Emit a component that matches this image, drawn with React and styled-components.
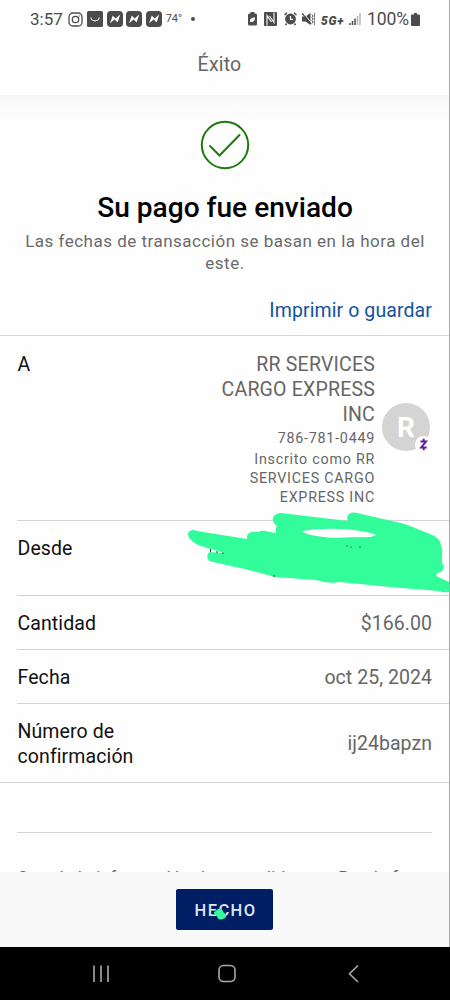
import React from 'react';
import styled, { createGlobalStyle } from 'styled-components';

const GlobalStyle = createGlobalStyle`
  * {
    box-sizing: border-box;
  }

  body {
    margin: 0;
    background-color: #fefefe;
    font-family: Roboto, "Liberation Sans", sans-serif;
  }
`;

const Screen = styled.div`
  display: flex;
  flex-direction: column;
  height: 1000px;
  overflow: hidden;
`;

const Page = styled.div`
  height: 947px;
  display: flex;
  flex-direction: column;
  border-right: 1px solid #a8a8a8;
`;

const StatusBar = styled.div`
  height: 38px;
  flex-shrink: 0;
  display: flex;
  justify-content: space-between;
  padding: 0 29px 0 30px;
  color: #4c4c4c;
`;

const StatusGroup = styled.div`
  display: flex;
  align-items: center;
`;

const StatusText = styled.span`
  font-size: ${({ $size }) => $size || 17}px;
  letter-spacing: ${({ $spacing }) => $spacing || 0}px;
  font-style: ${({ $italic }) => ($italic ? 'italic' : 'normal')};
  font-weight: ${({ $bold }) => ($bold ? 900 : 400)};
  line-height: 20px;
  margin-left: ${({ $gap }) => $gap || 0}px;
  padding-top: ${({ $drop }) => $drop || 0}px;
`;

const StatusIcon = styled.svg`
  display: block;
  flex-shrink: 0;
  margin-left: ${({ $gap }) => $gap || 0}px;
`;

const Header = styled.header`
  height: 57px;
  flex-shrink: 0;
  padding-top: 15px;
  padding-right: 10px;
  text-align: center;
  color: #666;
  font-size: 19.5px;
  line-height: 24px;
  letter-spacing: 0.2px;
`;

const Content = styled.main`
  height: 777px;
  overflow: hidden;
  background: linear-gradient(#f5f5f5 0, #fafafa 7px, #fefefe 30px);
`;

const Hero = styled.section`
  display: flex;
  flex-direction: column;
  align-items: center;
  height: 241px;
  padding-top: 25px;
  border-bottom: 1px solid #d8d8d8;
`;

const Title = styled.h1`
  margin: 20px 0 0;
  padding-left: 1px;
  color: #000;
  font-size: 28.1px;
  font-weight: 500;
  line-height: 36px;
`;

const Note = styled.p`
  margin: 4px 0 0;
  padding-left: 1px;
  width: 420px;
  text-align: center;
  color: #6a6a6a;
  font-size: 17px;
  line-height: 22px;
  letter-spacing: 0.49px;
`;

const PrintLink = styled.a`
  align-self: flex-end;
  margin: 25px 17px 0 0;
  color: #14529f;
  font-size: 19.5px;
  line-height: 24px;
  letter-spacing: 0.1px;
`;

const Row = styled.div`
  display: flex;
  justify-content: space-between;
  align-items: ${({ $top }) => ($top ? 'flex-start' : 'center')};
  height: ${({ $height }) => $height}px;
  margin-left: ${({ $full }) => ($full ? 0 : 17)}px;
  padding: ${({ $top }) => $top || 1}px 17px 0 ${({ $full }) => ($full ? 17.5 : 0.5)}px;
  border-bottom: 1px solid #d3d3d3;
  position: relative;
`;

const Label = styled.span`
  width: 150px;
  color: #111;
  font-size: 19.5px;
  line-height: 25px;
  letter-spacing: 0.1px;
`;

const Value = styled.span`
  color: #666;
  font-size: 19.5px;
  line-height: 25px;
  letter-spacing: 0.05px;
`;

const Recipient = styled.div`
  display: flex;
  align-items: center;
  gap: 7px;
  margin-right: 2px;
`;

const RecipientText = styled.div`
  width: 160px;
  display: flex;
  flex-direction: column;
  text-align: right;
  color: #666;
`;

const RecipientName = styled.span`
  font-size: 19.5px;
  line-height: 25px;
  letter-spacing: 0.2px;
`;

const RecipientDetail = styled.span`
  font-size: 14.3px;
  line-height: 19px;
  letter-spacing: 0.75px;
  padding-top: 2px;
`;

const Avatar = styled.div`
  width: 48px;
  height: 48px;
  margin-top: -6px;
  border-radius: 50%;
  background-color: #d4d4d4;
  color: #fff;
  font-size: 28px;
  font-weight: 700;
  line-height: 49px;
  text-align: center;
  position: relative;
`;

const Badge = styled.svg`
  position: absolute;
  right: -2px;
  bottom: -2px;
`;

const Scribble = styled.svg`
  position: absolute;
  left: 170px;
  top: -10px;
  z-index: 1;
`;

const Divider = styled.hr`
  margin: 49px 17px 0;
  border: 0;
  border-top: 1px solid #d3d3d3;
`;

const Disclosure = styled.p`
  margin: 33px 0 0 17px;
  white-space: nowrap;
  color: #666;
  font-size: 17px;
  line-height: 22px;
  letter-spacing: 0.3px;
`;

const Footer = styled.footer`
  flex: 1;
  display: flex;
  justify-content: center;
  padding-top: 17px;
  background-color: #f9f9f9;
`;

const DoneButton = styled.button`
  width: 97px;
  height: 41px;
  padding: 2px 0 0 2px;
  border: 0;
  border-radius: 2px;
  background-color: #001e64;
  color: #dfe4f3;
  font-family: inherit;
  font-size: 16.5px;
  font-weight: 500;
  letter-spacing: 1.4px;
  position: relative;
`;

const Dot = styled.svg`
  position: absolute;
  left: 37px;
  top: 18px;
`;

const NavBar = styled.nav`
  height: 53px;
  background-color: #000;
`;

const INK = '#4c4c4c';

const NewsIcon = ({ gap }) => (
  <StatusIcon $gap={gap} width="16" height="16" viewBox="0 0 16 16">
    <rect width="16" height="16" rx="3.800" fill={INK} />
    <path d="M3 12.300 5.800 4.500 8.600 7.500 13.200 3.600 10.600 11.500 7.600 8.600z" fill="#fff" />
  </StatusIcon>
);

const StatusLeft = () => (
  <StatusGroup>
    <StatusText>3:57</StatusText>
    <StatusIcon $gap={5} width="15" height="15" viewBox="0 0 15 15" fill="none" stroke={INK} strokeWidth="1.300">
      <rect x="1" y="1" width="13" height="13" rx="3.800" />
      <circle cx="7.500" cy="7.500" r="3.200" />
      <circle cx="11.100" cy="3.900" r="0.600" fill={INK} stroke="none" />
    </StatusIcon>
    <StatusIcon $gap={4} width="16" height="16" viewBox="0 0 16 16">
      <rect width="16" height="16" rx="1.500" fill={INK} />
      <path d="M3.800 6.500c.8 4.500 7.600 4.500 8.400 0" fill="none" stroke="#fff" strokeWidth="1.100" />
    </StatusIcon>
    <NewsIcon gap={4} />
    <NewsIcon gap={3} />
    <NewsIcon gap={4} />
    <StatusText $size={11} $gap={4} $spacing={-0.1}>74°</StatusText>
    <StatusIcon $gap={9} width="4" height="4">
      <circle cx="2" cy="2" r="2" fill={INK} />
    </StatusIcon>
  </StatusGroup>
);

const StatusRight = () => (
  <StatusGroup>
    <StatusIcon width="9" height="14" viewBox="0 0 9 14">
      <path d="M2.500 0h4v1.500h1A1.500 1.500 0 0 1 9 3v9a1.500 1.500 0 0 1-1.500 1.500h-6A1.500 1.500 0 0 1 0 12V3a1.500 1.500 0 0 1 1.500-1.500h1z" fill={INK} />
      <path d="M2 10c-.5-3 1.500-4.500 5-4.500 0 3-1.500 5-4 4.200z" fill="#fff" />
    </StatusIcon>
    <StatusIcon $gap={7} width="13" height="14" viewBox="0 0 13 14">
      <rect width="13" height="14" rx="1" fill={INK} />
      <path d="M3 13.500V3.500L7.500 10M10 .5v10L5.500 4" fill="none" stroke="#fff" strokeWidth="1.100" />
    </StatusIcon>
    <StatusIcon $gap={7} width="13" height="14" viewBox="0 0 13 14">
      <path d="M.5 3 3 .8M12.500 3 10 .8M2.500 11.500l-1 1.500M10.500 11.500l1 1.500" stroke={INK} strokeWidth="1.500" />
      <circle cx="6.500" cy="7" r="5.400" fill={INK} />
      <path d="M6.500 4v3.300H9" fill="none" stroke="#fff" strokeWidth="1.200" />
    </StatusIcon>
    <StatusIcon $gap={5} width="13" height="14" viewBox="0 0 13 14">
      <path d="M0 4.500h3.500L8.500 1v12L3.500 9.500H0z" fill={INK} />
      <path d="M1.200 1 10 11.500" stroke="#fff" strokeWidth="1" />
      <path d="M0 1.200 9 12" stroke={INK} strokeWidth="1.200" />
      <path d="M10 2.500l1 1.500-1 1.500 1 1.500-1 1.500 1 1.500-1 1.500M12.200 1l.5 1.500-.5 1.500.5 1.500-.5 1.500.5 1.500-.5 1.500.5 1.500-.5 1.500" fill="none" stroke={INK} strokeWidth="0.900" />
    </StatusIcon>
    <StatusText $gap={6} $size={12} $spacing={0.7} $drop={4} $italic $bold>5G+</StatusText>
    <StatusIcon $gap={5} width="12" height="13" viewBox="0 0 12 13" strokeWidth="1.500">
      <path d="M1 10v2M3.500 8v4M6 5.500V12" stroke={INK} />
      <path d="M8.500 3v9M11 0v12" stroke="#b5b5b5" />
    </StatusIcon>
    <StatusText $gap={6} $size={17.5} $spacing={-0.1}>100%</StatusText>
    <StatusIcon $gap={2} width="9" height="13" viewBox="0 0 9 13">
      <path d="M3 0h3v1.500h2A1 1 0 0 1 9 2.500V12a1 1 0 0 1-1 1H1a1 1 0 0 1-1-1V2.500a1 1 0 0 1 1-1h2z" fill={INK} />
    </StatusIcon>
  </StatusGroup>
);

const App = () => {
  return (
    <Screen>
      <GlobalStyle />
      <Page>
        <StatusBar>
          <StatusLeft />
          <StatusRight />
        </StatusBar>
        <Header>Éxito</Header>
        <Content>
          <Hero>
            <svg width="50" height="50" viewBox="0 0 50 50" fill="none" stroke="#1f7a0c" strokeWidth="2">
              <circle cx="25" cy="25" r="23.200" />
              <path d="M10 26l9.500 9.500L39.500 15" strokeLinecap="round" />
            </svg>
            <Title>Su pago fue enviado</Title>
            <Note>Las fechas de transacción se basan en la hora del este.</Note>
            <PrintLink>Imprimir o guardar</PrintLink>
          </Hero>

          <Row $top={16} $height={185}>
            <Label>A</Label>
            <Recipient>
              <RecipientText>
                <RecipientName>RR SERVICES CARGO EXPRESS INC</RecipientName>
                <RecipientDetail>786-781-0449</RecipientDetail>
                <RecipientDetail>Inscrito como RR SERVICES CARGO EXPRESS INC</RecipientDetail>
              </RecipientText>
              <Avatar>
                R
                <Badge width="17" height="17" viewBox="0 0 17 17">
                  <circle cx="8.500" cy="8.500" r="8.500" fill="#fff" />
                  <path d="M5.500 5.500h5.500L6.200 11.500h5.500M8.700 2.800v2.700M8.700 11.500V14.200" fill="none" stroke="#5c1fa3" strokeWidth="2" />
                </Badge>
              </Avatar>
            </Recipient>
          </Row>
          <Row $top={15} $height={75}>
            <Label>Desde</Label>
            <Scribble width="262" height="82" viewBox="187 511 262 82">
              <path
                d="M188 535C188 530 193 529 197 531L247 539C246 532 252 531 258 532C262 529 268 532 276 533C275 530 276 527 277 526C270 522 272 513 281 513L348 521C345 515 351 511 357 513L405 524L430 534Q441 538 441 546C443 549 442 553 442 557V563C446 567 443 573 437 573L436 576L449 582V592Q444 593 438 591L390 587L340 582Q328 584 316 580L275 577L249 570L213 562C206 561 206 554 210 552L224 553L198 545Q189 540 188 535Z"
                fill="#33fd9a"
              />
              <path d="M302 531C321 528 344 528 360 531Q373 533 376 535L371 537Q350 537 335 538Q306 536 302 531Z" fill="#fefefe" />
              <path d="M210.500 549v3M217 551v2M223 552.500v1.500M274 575v2" stroke="#333" strokeWidth="1" />
              <path d="M346 546h2M350 547h2M359 547h2" stroke="#218c5b" strokeWidth="1" />
            </Scribble>
          </Row>
          <Row $height={54}>
            <Label>Cantidad</Label>
            <Value>$166.00</Value>
          </Row>
          <Row $height={54}>
            <Label>Fecha</Label>
            <Value>oct 25, 2024</Value>
          </Row>
          <Row $full $height={79}>
            <Label>Número de confirmación</Label>
            <Value>ij24bapzn</Value>
          </Row>
          <Divider />
          <Disclosure>Guarde la información de su pedido con. Puede f</Disclosure>
        </Content>
        <Footer>
          <DoneButton>
            HECHO
            <Dot width="14" height="14" viewBox="0 0 14 14">
              <path d="M1 5C3 5 4 1 8 2C10 3 10 6 13 7Q14 11 10 12Q5 14 4 9Q1 8 1 5Z" fill="#33fd9a" />
            </Dot>
          </DoneButton>
        </Footer>
      </Page>
      <NavBar>
        <svg width="450" height="53" viewBox="0 0 450 53" fill="none" stroke="#aaa" strokeWidth="1.600">
          <path d="M94 18.500v16.500M101 18.500v16.500M108 18.500v16.500" />
          <rect x="219" y="18.500" width="16" height="16" rx="4.500" />
          <path d="M358 18.500l-8.500 8.300 8.500 8.200" />
        </svg>
      </NavBar>
    </Screen>
  );
};

export default App;
